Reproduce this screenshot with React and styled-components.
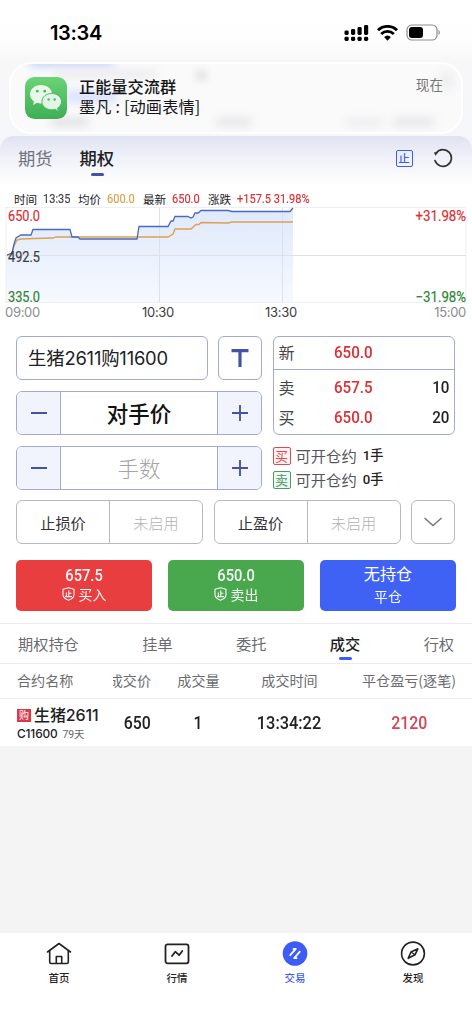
import React from "react";
import styled, { createGlobalStyle, css } from "styled-components";

const C = {
  blue: "#3d5cf5",
  indigo: "#4453a8",
  line: "#a4a9d4",
  red: "#dc3035",
  green: "#2f8436",
  ink: "#202124",
  grey: "#6b6b70",
};
const CJK = '"Noto Sans CJK SC", sans-serif';

const Global = createGlobalStyle`
  * { box-sizing: border-box; }
  body { margin: 0; background: #fff; }
`;

const Page = styled.main`
  width: 472px;
  height: 1024px;
  overflow: hidden;
  display: flex;
  flex-direction: column;
  background: #fff;
  color: ${C.ink};
  font-family: Inter, ${CJK};
  line-height: 1;
  white-space: nowrap;
`;

const TopArea = styled.header`
  height: 136px;
  flex: none;
  background: linear-gradient(#fff 0, #fefefe 38px, #f7f7f8 62px, #f5f6f9 136px);
`;

const StatusBar = styled.div`
  height: 62px;
  padding: 3px 31px 0 50px;
  display: flex;
  align-items: center;
  justify-content: space-between;
`;

const Clock = styled.span`
  font: 600 20px/24px Inter, sans-serif;
  letter-spacing: -0.35px;
  color: #000;
`;

const StatusIcons = styled.div`
  display: flex;
  align-items: center;
  gap: 8px;
`;

const Notice = styled.section`
  position: relative;
  width: 454px;
  height: 72px;
  margin-left: 9px;
  padding: 0 18px 0 14px;
  display: flex;
  align-items: center;
  border-radius: 22px;
  border: 2px solid #fff;
  background: #fafafb;
  overflow: hidden;
`;

const Smudge = styled.span`
  position: absolute;
  left: ${(p) => p.$x}px;
  top: ${(p) => p.$y}px;
  width: ${(p) => p.$w}px;
  height: ${(p) => p.$h}px;
  border-radius: 5px;
  background: ${(p) => p.$c};
  filter: blur(4px);
`;

const NoticeBody = styled.div`
  position: relative;
  flex: 1;
  margin-left: 12px;
  padding-bottom: 3px;
  display: flex;
  flex-direction: column;
  gap: 3px;
  color: #161616;
`;

const NoticeTitle = styled.strong`
  font: 500 16.2px/17px ${CJK};
`;
const NoticeText = styled.span`
  font: 400 16.2px/17px ${CJK};
  letter-spacing: 0.15px;
`;
const NoticeTime = styled.time`
  position: relative;
  align-self: flex-start;
  margin-top: 12px;
  font: 400 13.6px/16px ${CJK};
  color: #777;
`;

const HeadWrap = styled.div`
  flex: none;
  background: #f5f6f9;
`;

const PanelHead = styled.div`
  height: 52px;
  padding: 0 19px 0 18px;
  display: flex;
  background: linear-gradient(#dfe2ef 0, #e9ebf6 12px, #f7f8fc 34px, #fff 50px);
  border-radius: 14px 14px 0 0;
`;

const HeadTab = styled.div`
  width: 61.5px;
  padding-top: 12px;
  font: ${(p) => (p.$on ? 500 : 400)} 17.3px/19px ${CJK};
  color: ${(p) => (p.$on ? "#202124" : "#717480")};
  &::after {
    content: "";
    display: block;
    width: 13px;
    height: 3px;
    margin: 6px 0 0 11px;
    border-radius: 2px;
    background: ${(p) => (p.$on ? C.indigo : "transparent")};
  }
`;

const HeadTools = styled.div`
  margin-left: auto;
  padding-top: 12px;
  display: flex;
  gap: 20.5px;
`;

const StopMark = styled.span`
  width: 17px;
  height: 17px;
  margin-top: 1.5px;
  border: 1.5px solid ${C.blue};
  border-radius: 2px;
  font: 500 11.5px/14px ${CJK};
  text-align: center;
  color: ${C.blue};
`;

const Num = styled.span`
  display: inline-block;
  font-family: Roboto, sans-serif;
  font-weight: 500;
  transform: scaleX(${(p) => p.$k || 0.89});
  transform-origin: ${(p) => p.$o || "center"};
`;

const InfoLine = styled.div`
  height: 18px;
  flex: none;
  padding: 3px 0 0 14px;
  display: flex;
  align-items: center;
  font: 400 11.6px/16px ${CJK};
`;
const InfoCell = styled.span`
  width: ${(p) => p.$w}px;
  display: flex;
  align-items: center;
  gap: 6px;
`;
const InfoNum = styled(Num)`
  font-size: 12.4px;
  font-weight: 400;
  color: ${(p) => p.$c};
  -webkit-text-stroke: 0.15px currentColor;
`;

const Chart = styled.svg`
  display: block;
  flex: none;
`;

const Times = styled.div`
  height: 16px;
  flex: none;
  padding: 0 6px 0 5px;
  display: grid;
  grid-template-columns: 137px 123px 1fr 60px;
  font: 400 13px/12px Inter, sans-serif;
  letter-spacing: -0.3px;
  color: #3c3c40;
  span:first-child, span:last-child { color: #8b8b90; }
  span:last-child { text-align: right; }
`;

const Form = styled.div`
  flex: none;
  padding: 14px 17px 0 16px;
  display: grid;
  grid-template-columns: 246px 183px;
  column-gap: 10.5px;
`;

const Stack = styled.div`
  display: flex;
  flex-direction: column;
  gap: 11px;
`;

const Row = styled.div`
  display: flex;
  gap: ${(p) => p.$gap || 0}px;
`;

const Box = styled.div`
  height: 44px;
  width: ${(p) => p.$w}px;
  border: 1px solid ${(p) => (p.$grey ? "#b9b9bd" : C.line)};
  border-radius: 6px;
  display: flex;
  align-items: center;
  overflow: hidden;
  background: #fff;
`;

const Contract = styled(Box)`
  padding-left: 11px;
  font: 400 18.4px/24px Inter, ${CJK};
  letter-spacing: -0.2px;
`;

const Centered = styled(Box)`
  justify-content: center;
`;

const StepButton = styled.button`
  width: 44px;
  height: 42px;
  padding: 0;
  flex: none;
  display: grid;
  place-items: center;
  border: 0;
  border-${(p) => p.$side}: 1px solid ${C.line};
  background: #f1f3fd;
`;

const StepValue = styled.span`
  flex: 1;
  text-align: center;
  font: ${(p) => (p.$empty ? 300 : 500)} 21.5px/29px ${CJK};
  padding-bottom: 1px;
  color: ${(p) => (p.$empty ? "#a5a5a9" : "#111")};
`;

const Quotes = styled.div`
  width: 182.5px;
  height: 99px;
  border: 1px solid ${C.line};
  border-radius: 6px;
`;

const Quote = styled.div`
  height: ${(p) => p.$h}px;
  padding: 0 5px 2px;
  display: grid;
  grid-template-columns: 55px 1fr 40px;
  align-items: center;
  font: 400 16px/20px ${CJK};
  color: #444;
  ${(p) => p.$line && css`border-bottom: 1px solid ${C.line};`}
`;

const QuotePrice = styled(Num)`
  justify-self: start;
  font-size: 17px;
  color: ${C.red};
`;
const QuoteQty = styled(Num)`
  justify-self: end;
  font-size: 17px;
  color: #222;
`;

const Limits = styled.div`
  margin-top: 11px;
  display: flex;
  flex-direction: column;
  gap: 5px;
`;
const Limit = styled.div`
  height: 19px;
  display: flex;
  align-items: center;
  font: 400 15.3px/19px ${CJK};
  color: #55565a;
  b { margin-left: 6px; font: 500 13.2px/19px Roboto, ${CJK}; color: #222; }
`;
const LimitTag = styled.span`
  width: 18px;
  height: 18px;
  margin-right: 5px;
  border: 1px solid ${(p) => p.$c};
  border-radius: 2px;
  background: ${(p) => p.$bg};
  color: ${(p) => p.$c};
  font: 400 13px/15px ${CJK};
  text-align: center;
`;

const StopRow = styled.div`
  flex: none;
  padding: 10px 16px 0;
  display: flex;
  gap: 10.5px;
`;
const StopPart = styled.span`
  flex: 1;
  height: 100%;
  text-align: center;
  font: 400 15.2px/43px ${CJK};
  color: ${(p) => (p.$off ? "#b2b2b5" : "#333")};
  font-weight: ${(p) => (p.$off ? 300 : 400)};
  & + & { border-left: 1px solid #b9b9bd; }
`;

const Actions = styled.div`
  flex: none;
  padding: 16px 16px 0;
  display: grid;
  grid-template-columns: repeat(3, 136px);
  column-gap: 16px;
`;
const Action = styled.button`
  height: 51px;
  padding: 6px 0 0;
  border: 0;
  border-radius: 5px;
  background: ${(p) => p.$bg};
  color: #fff;
  display: flex;
  flex-direction: column;
  align-items: center;
`;
const ActionPrice = styled(Num)`
  font-size: 16.5px;
  line-height: 19px;
  opacity: 0.95;
`;
const ActionHead = styled.span`
  font: 400 16.2px/18px ${CJK};
  margin-top: -2px;
`;
const ActionLabel = styled.span`
  margin-top: 0;
  display: flex;
  align-items: center;
  gap: 4px;
  font: 400 13.9px/18px ${CJK};
  opacity: 0.95;
`;
const ActionNote = styled(ActionLabel)`
  margin-top: 5px;
`;

const Tabs = styled.nav`
  height: 41px;
  flex: none;
  margin-top: 12px;
  padding: 0 18px;
  display: flex;
  justify-content: space-between;
  border-top: 1px solid #ececee;
  border-bottom: 1px solid #ececee;
`;
const Tab = styled.div`
  padding-top: 10px;
  display: flex;
  flex-direction: column;
  align-items: center;
  font: ${(p) => (p.$on ? 500 : 400)} 15.2px/19px ${CJK};
  color: ${(p) => (p.$on ? "#1e1e20" : C.grey)};
  &::after {
    content: "";
    width: 13px;
    height: 3px;
    margin-top: 4px;
    border-radius: 2px;
    background: ${(p) => (p.$on ? C.blue : "transparent")};
  }
`;

const cols = css`
  display: grid;
  grid-template-columns: 96px 44px 83px 99px 133px;
  padding: 0 0 0 17px;
  align-items: center;
  > :last-child { margin-left: 7px; }
`;
const TableHead = styled.div`
  ${cols}
  height: 35px;
  padding-bottom: 2px;
  flex: none;
  font: 400 14.1px/18px ${CJK};
  color: ${C.grey};
  border-bottom: 1px solid #ececee;
`;
const Cell = styled.span`
  justify-self: ${(p) => p.$j || "center"};
`;
const ClippedCell = styled.span`
  width: 38px;
  display: flex;
  justify-content: flex-end;
  overflow: hidden;
`;
const TableRow = styled.div`
  ${cols}
  height: 47px;
  flex: none;
`;
const RowNum = styled(Num)`
  justify-self: center;
  font-size: 17.8px;
  color: ${(p) => p.$c || "#222"};
`;
const RowPrice = styled(RowNum)`
  margin-left: 4px;
`;
const Product = styled.div`
  display: flex;
  flex-direction: column;
  gap: 1px;
  padding-top: 2px;
`;
const ProductName = styled.div`
  display: flex;
  align-items: center;
  gap: 3px;
  font: 500 16px/19px Inter, ${CJK};
  letter-spacing: -0.1px;
`;
const CallTag = styled.span`
  width: 14px;
  height: 13px;
  background: #dc3848;
  color: #fff;
  font: 400 10px/12px ${CJK};
  text-align: center;
`;
const ProductCode = styled.div`
  font: 500 11.9px/16px Inter, ${CJK};
  letter-spacing: -0.15px;
  small { margin-left: 5px; font: 400 10.4px/14px Roboto, ${CJK}; color: #66666a; }
`;

const Empty = styled.div`
  flex: 1;
  background: #f4f4f5;
`;

const BottomNav = styled.nav`
  height: 91px;
  flex: none;
  padding-top: 7px;
  display: grid;
  grid-template-columns: repeat(4, 118px);
  background: #fff;
`;
const NavItem = styled.div`
  display: flex;
  flex-direction: column;
  align-items: center;
  gap: 4px;
  font: 500 10.5px/14px ${CJK};
  color: ${(p) => (p.$on ? C.blue : "#222")};
`;

const AppIcon = styled.svg`
  position: relative;
  flex: none;
`;

const WeChat = () => (
  <AppIcon width="42" height="42" viewBox="0 0 42 42">
    <defs>
      <linearGradient id="wx" x2="0" y2="1">
        <stop stopColor="#6bd476" />
        <stop offset="1" stopColor="#3fae55" />
      </linearGradient>
    </defs>
    <rect width="42" height="42" rx="9.5" fill="url(#wx)" />
    <path d="M16 8C9.700 8 5 12.100 5 17.300c0 3 1.500 5.500 4 7.200L8 28l4-2.200c1.300.4 2.600.6 4 .6 6.200 0 11-4.100 11-9.200S22.200 8 16 8z" fill="#e9f8eb" />
    <circle cx="12.300" cy="14.200" r="1.400" fill="#4cb960" />
    <circle cx="19.700" cy="14.200" r="1.400" fill="#4cb960" />
    <path d="M26.700 16.400c-5.500 0-9.800 3.600-9.800 8.200s4.300 8.200 9.800 8.200c1.200 0 2.300-.2 3.300-.5l3.400 1.900-.8-3.100c2.400-1.500 3.900-3.800 3.900-6.500 0-4.600-4.300-8.200-9.800-8.200z" fill="#e3f5e6" stroke="#50bd62" strokeWidth="1" />
    <circle cx="23.600" cy="22.500" r="1.200" fill="#4cb960" />
    <circle cx="29.700" cy="22.500" r="1.200" fill="#4cb960" />
  </AppIcon>
);

const Signal = () => (
  <svg width="25" height="18" viewBox="0 0 25 18">
    {[4.5, 6, 8, 10].map((h, i) => (
      <g key={i}>
        <rect x={0.5 + i * 6.5} y={11 - h} width="4.200" height={h} rx="1.400" />
        <rect x={0.5 + i * 6.5} y="12.800" width="4.200" height="4.200" rx="1.400" />
      </g>
    ))}
  </svg>
);

const Wifi = () => (
  <svg width="21" height="16" viewBox="0 0 21 16" fill="none" stroke="#000">
    <path d="M1 5.300a13.500 13.500 0 0 1 19 0" strokeWidth="2.900" />
    <path d="M4.200 8.900a9 9 0 0 1 12.600 0" strokeWidth="2.800" />
    <path d="M10.500 15.800l-3.400-3.700a5 5 0 0 1 6.800 0z" fill="#000" stroke="none" />
  </svg>
);

const Battery = () => (
  <svg width="35" height="17" viewBox="0 0 35 17">
    <rect x="1" y="1" width="30" height="15" rx="4.800" fill="#fff" stroke="#8d8d8d" strokeWidth="1.200" />
    <rect x="3" y="3" width="14" height="11" rx="3" />
    <path d="M32.500 6v5c1.800-.6 1.800-4.400 0-5z" fill="#8d8d8d" />
  </svg>
);

const Refresh = () => (
  <svg width="20" height="20" viewBox="0 0 20 20" fill="none" stroke="#333" strokeWidth="1.700">
    <path d="M2 12.600A8.400 8.400 0 1 0 3.200 5" strokeLinecap="round" />
    <path d="M.9 4.200l4.300.4-2.800 3.100z" fill="#333" stroke="none" />
  </svg>
);

const Shield = () => (
  <svg width="13" height="14" viewBox="0 0 13 14" fill="none" stroke="#fff" strokeWidth="1.100">
    <path d="M6.500 .8L12 2.200v5.600c0 2.400-2.200 4.300-5.500 5.500C3.200 12.100 1 10.200 1 7.800V2.200z" strokeLinejoin="round" />
    <path d="M6.800 3.500v6M6.800 6.200h2.600M4.400 5.600v3.900M3 9.600h7" />
  </svg>
);

const Minus = () => (
  <svg width="18" height="18" stroke={C.indigo} strokeWidth="1.900"><path d="M1 9h16" /></svg>
);
const Plus = () => (
  <svg width="18" height="18" stroke={C.indigo} strokeWidth="1.900"><path d="M1 9h16M9 1v16" /></svg>
);

const HomeIcon = () => (
  <svg width="26" height="27" viewBox="0 0 26 27" fill="none" stroke="#222" strokeWidth="1.600" strokeLinejoin="round">
    <path d="M1.500 12L13 3.500 24.500 12" strokeLinecap="round" />
    <path d="M3.700 10.500V22a1.500 1.500 0 0 0 1.500 1.500h15.600a1.500 1.500 0 0 0 1.500-1.500V10.500M10.300 23.500v-7h5.400v7" />
  </svg>
);
const MarketIcon = () => (
  <svg width="26" height="27" viewBox="0 0 26 27" fill="none" stroke="#222" strokeWidth="1.800" strokeLinejoin="round" strokeLinecap="round">
    <rect x="1.500" y="4.300" width="23" height="19" rx="2" />
    <path d="M8 16l3.300-4.300 3.800 3.500L18.300 11" />
  </svg>
);
const TradeIcon = () => (
  <svg width="26" height="27" viewBox="0 0 26 27" fill="none" stroke="#fff" strokeWidth="1.800" strokeLinecap="round" strokeLinejoin="round">
    <circle cx="13" cy="13.500" r="12.300" fill={C.blue} stroke="none" />
    <path d="M8.200 15.200l5.600-6.300h-2.300M17.800 11.600l-5.600 6.500h2.400" />
  </svg>
);
const CompassIcon = () => (
  <svg width="26" height="27" viewBox="0 0 26 27" fill="none" stroke="#222" strokeWidth="1.600" strokeLinejoin="round">
    <circle cx="13" cy="13.500" r="11.400" />
    <path d="M17.800 8.800l-2.800 6-6.800 3.500 2.800-6.300z" />
    <path d="M11 12l4 2.800" strokeWidth="1.200" />
  </svg>
);

const price =
  "7,49 12,47 14,38 16,32 21,29 31,29 33,23.500 70,23.500 72,31 78,31 80,33 137,33 139,20.500 168,20.500 171,15 173,15 175,10.500 188,10.500 191,12 193,11 195,7 198,7 201,4.500 228,4.500 232,5.500 290,5.500 293,2";
const average =
  "7,49 12,48 14,40 17,34 21,33 34,32.500 53,32 56,31 168,31 173,28 175,23 191,23 196,18.500 199,18.500 201,16.500 228,17 232,16 293,16";

const AxisText = ({ x, y, w, fill, children }) => (
  <text x={x} y={y} textLength={w} lengthAdjust="spacingAndGlyphs" fill={fill} fontFamily="Roboto, sans-serif" fontSize="14.400" stroke={fill} strokeWidth=".2">
    {children}
  </text>
);

const PriceChart = () => (
  <Chart width="472" height="100" viewBox="0 0 472 100">
    <defs>
      <linearGradient id="area" x2="0" y2="1">
        <stop stopColor="#dfe9fc" />
        <stop offset="1" stopColor="#f6f9fe" />
      </linearGradient>
    </defs>
    <polygon points={`6,96 6,49 ${price} 293,96`} fill="url(#area)" />
    <path d="M5 1.500h461M466 1.500v95M5 96.500h461M6 1.500v95" fill="none" stroke="#eeeff2" />
    <path d="M5 49.500h461M159.500 2v94M282.500 2v94" stroke="#dde1e9" />
    <polyline points={average} fill="none" stroke="#dda04e" strokeWidth="1.300" />
    <polyline points={price} fill="none" stroke="#4a69c0" strokeWidth="1.300" />
    <AxisText x={8} y={15} w={32} fill={C.red}>650.0</AxisText>
    <AxisText x={8} y={55.5} w={32} fill="#3c3d44">492.5</AxisText>
    <AxisText x={8} y={95.5} w={32} fill={C.green}>335.0</AxisText>
    <AxisText x={415.5} y={15} w={50.5} fill={C.red}>+31.98%</AxisText>
    <AxisText x={415.5} y={95.5} w={50.5} fill={C.green}>−31.98%</AxisText>
  </Chart>
);

const Stepper = ({ value, empty }) => (
  <Box $w={246}>
    <StepButton $side="right"><Minus /></StepButton>
    <StepValue $empty={empty}>{value}</StepValue>
    <StepButton $side="left"><Plus /></StepButton>
  </Box>
);

const StopBox = ({ label }) => (
  <Box $w={187} $grey>
    <StopPart>{label}</StopPart>
    <StopPart $off>未启用</StopPart>
  </Box>
);

export default function App() {
  return (
    <Page>
      <Global />
      <TopArea>
        <StatusBar>
          <Clock>13:34</Clock>
          <StatusIcons><Signal /><Wifi /><Battery /></StatusIcons>
        </StatusBar>
        <Notice>
          <Smudge $x={18} $y={-5} $w={85} $h={7} $c="#b9cbf7" />
          <Smudge $x={54} $y={26} $w={52} $h={13} $c="#dbe3fb" />
          <Smudge $x={42} $y={6} $w={104} $h={8} $c="#ececee" />
          <Smudge $x={186} $y={7} $w={9} $h={9} $c="#d2d2d4" />
          <Smudge $x={40} $y={54} $w={38} $h={8} $c="#dfdfe2" />
          <Smudge $x={205} $y={54} $w={36} $h={8} $c="#e5e5e7" />
          <Smudge $x={334} $y={54} $w={38} $h={8} $c="#ededef" />
          <Smudge $x={382} $y={54} $w={42} $h={8} $c="#e5e5e7" />
          <Smudge $x={428} $y={8} $w={16} $h={18} $c="#efeff1" />
          <WeChat />
          <NoticeBody>
            <NoticeTitle>正能量交流群</NoticeTitle>
            <NoticeText>墨凡 : [动画表情]</NoticeText>
          </NoticeBody>
          <NoticeTime>现在</NoticeTime>
        </Notice>
      </TopArea>

      <HeadWrap>
        <PanelHead>
          <HeadTab>期货</HeadTab>
          <HeadTab $on>期权</HeadTab>
          <HeadTools><StopMark>止</StopMark><Refresh /></HeadTools>
        </PanelHead>
      </HeadWrap>

      <InfoLine>
        <InfoCell $w={64}>时间<InfoNum $o="left" $c="#444">13:35</InfoNum></InfoCell>
        <InfoCell $w={65}>均价<InfoNum $o="left" $c="#dda04e">600.0</InfoNum></InfoCell>
        <InfoCell $w={65}>最新<InfoNum $o="left" $c={C.red}>650.0</InfoNum></InfoCell>
        <InfoCell $w={120}>涨跌<InfoNum $o="left" $c={C.red}>+157.5 31.98%</InfoNum></InfoCell>
      </InfoLine>
      <PriceChart />
      <Times><span>09:00</span><span>10:30</span><span>13:30</span><span>15:00</span></Times>

      <Form>
        <Stack>
          <Row $gap={10}>
            <Contract $w={192}>生猪2611购11600</Contract>
            <Centered $w={44}>
              <svg width="20" height="20" stroke={C.indigo} strokeWidth="3.200"><path d="M1.500 2.600h17M10 2.600V19" /></svg>
            </Centered>
          </Row>
          <Stepper value="对手价" />
          <Stepper value="手数" empty />
        </Stack>
        <div>
          <Quotes>
            <Quote $h={33} $line>新<QuotePrice $o="left">650.0</QuotePrice></Quote>
            <Quote $h={35}>卖<QuotePrice $o="left">657.5</QuotePrice><QuoteQty $o="right">10</QuoteQty></Quote>
            <Quote $h={26}>买<QuotePrice $o="left">650.0</QuotePrice><QuoteQty $o="right">20</QuoteQty></Quote>
          </Quotes>
          <Limits>
            <Limit><LimitTag $c="#dc4a52" $bg="#fdf1f1">买</LimitTag>可开仓约<b>1手</b></Limit>
            <Limit><LimitTag $c="#4a9a66" $bg="#eff8f1">卖</LimitTag>可开仓约<b>0手</b></Limit>
          </Limits>
        </div>
      </Form>

      <StopRow>
        <StopBox label="止损价" />
        <StopBox label="止盈价" />
        <Centered $w={44} $grey>
          <svg width="20" height="12" fill="none" stroke="#77777b" strokeWidth="1.500"><path d="M1.500 2l8.500 7.500L18.500 2" /></svg>
        </Centered>
      </StopRow>

      <Actions>
        <Action $bg="#e83e40"><ActionPrice>657.5</ActionPrice><ActionLabel><Shield />买入</ActionLabel></Action>
        <Action $bg="#49a84e"><ActionPrice>650.0</ActionPrice><ActionLabel><Shield />卖出</ActionLabel></Action>
        <Action $bg="#4062f4"><ActionHead>无持仓</ActionHead><ActionNote>平仓</ActionNote></Action>
      </Actions>

      <Tabs>
        <Tab>期权持仓</Tab><Tab>挂单</Tab><Tab>委托</Tab><Tab $on>成交</Tab><Tab>行权</Tab>
      </Tabs>
      <TableHead>
        <Cell $j="start">合约名称</Cell>
        <ClippedCell>成交价</ClippedCell>
        <Cell>成交量</Cell>
        <Cell>成交时间</Cell>
        <Cell>平仓盈亏(逐笔)</Cell>
      </TableHead>
      <TableRow>
        <Product>
          <ProductName><CallTag>购</CallTag>生猪2611</ProductName>
          <ProductCode>C11600<small>79天</small></ProductCode>
        </Product>
        <RowPrice>650</RowPrice>
        <RowNum>1</RowNum>
        <RowNum $k={0.92}>13:34:22</RowNum>
        <RowNum $c="#d84450">2120</RowNum>
      </TableRow>
      <Empty />

      <BottomNav>
        <NavItem><HomeIcon />首页</NavItem>
        <NavItem><MarketIcon />行情</NavItem>
        <NavItem $on><TradeIcon />交易</NavItem>
        <NavItem><CompassIcon />发现</NavItem>
      </BottomNav>
    </Page>
  );
}
